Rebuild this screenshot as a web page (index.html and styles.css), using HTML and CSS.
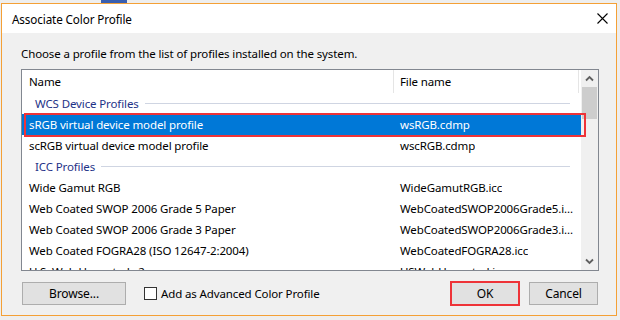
FILE: index.html
```html
<!DOCTYPE html>
<html>
<head>
<meta charset="utf-8">
<link rel="stylesheet" href="styles.css">
</head>
<body>
<div class="screen">
  <div class="behind-blue"></div>
  <div class="window">
    <div class="titlebar">
      <span class="title">Associate Color Profile</span>
      <svg class="close" width="11" height="11" viewBox="0 0 11 11"><path d="M0.5 0.5 L10.5 10.5 M10.5 0.5 L0.5 10.5" stroke="#000" stroke-width="1.1" fill="none"/></svg>
    </div>
    <div class="content">
      <p class="prompt">Choose a profile from the list of profiles installed on the system.</p>
      <div class="listbox">
        <div class="listmain">
          <div class="header">
            <div class="hcol hname">Name</div>
            <div class="hcol hfile">File name</div>
          </div>
          <div class="group"><span>WCS Device Profiles</span><i class="rule"></i></div>
          <div class="row selected"><span class="c1">sRGB virtual device model profile</span><span class="c2">wsRGB.cdmp</span></div>
          <div class="row"><span class="c1">scRGB virtual device model profile</span><span class="c2">wscRGB.cdmp</span></div>
          <div class="group"><span>ICC Profiles</span><i class="rule"></i></div>
          <div class="row"><span class="c1">Wide Gamut RGB</span><span class="c2">WideGamutRGB.icc</span></div>
          <div class="row"><span class="c1">Web Coated SWOP 2006 Grade 5 Paper</span><span class="c2">WebCoatedSWOP2006Grade5.i...</span></div>
          <div class="row"><span class="c1">Web Coated SWOP 2006 Grade 3 Paper</span><span class="c2">WebCoatedSWOP2006Grade3.i...</span></div>
          <div class="row"><span class="c1">Web Coated FOGRA28 (ISO 12647-2:2004)</span><span class="c2">WebCoatedFOGRA28.icc</span></div>
          <div class="row"><span class="c1">U.S. Web Uncoated v2</span><span class="c2">USWebUncoated.icc</span></div>
        </div>
        <div class="scrollbar">
          <div class="sbtn"><svg width="17" height="17" viewBox="0 0 17 17"><polyline points="5,10.5 8.5,7 12,10.5" fill="none" stroke="#606060" stroke-width="1.8"/></svg></div>
          <div class="thumb"></div>
          <div class="track"></div>
          <div class="sbtn"><svg width="17" height="17" viewBox="0 0 17 17"><polyline points="5,6.5 8.5,10 12,6.5" fill="none" stroke="#606060" stroke-width="1.8"/></svg></div>
        </div>
        <div class="mark-row"></div>
      </div>
      <div class="footer">
        <button class="btn browse">Browse...</button>
        <label class="check"><span class="box"></span><span>Add as Advanced Color Profile</span></label>
        <span class="spacer"></span>
        <button class="btn ok">OK</button>
        <button class="btn cancel">Cancel</button>
      </div>
    </div>
  </div>
</div>
</body>
</html>
```

FILE: styles.css
```css
* { box-sizing: border-box; }
html, body { margin: 0; padding: 0; }
body {
  font-family: "Noto Sans", "Open Sans", "DejaVu Sans", sans-serif;
  font-size: 11.5px;
  letter-spacing: -0.12px;
  color: #000;
}
.screen {
  position: relative;
  width: 620px;
  height: 320px;
  overflow: hidden;
  background: #eeeeee;
  padding: 3px 0 0 1px;
}
.behind-blue {
  position: absolute;
  left: 101px;
  top: 0;
  width: 26px;
  height: 3px;
  background: #3a5fb0;
}
.window {
  width: 616px;
  height: 313px;
  border: 1px solid #f4a036;
  display: flex;
  flex-direction: column;
}
.titlebar {
  height: 29px;
  background: #ffffff;
  display: flex;
  align-items: center;
  justify-content: space-between;
  padding: 0 8px 0 10px;
}
.title { line-height: 16px; font-size: 11.7px; }
.close { display: block; }
.content {
  flex: 1;
  background: #f0f0f0;
  padding: 13px 17px 0 19px;
}
.prompt {
  margin: 0;
  line-height: 16px;
  height: 16px;
  white-space: nowrap;
}
.listbox {
  position: relative;
  margin-top: 7px;
  width: 578px;
  height: 202px;
  border: 1px solid #828790;
  background: #ffffff;
  display: flex;
}
.listmain {
  flex: 1;
  overflow: hidden;
}
.header {
  display: flex;
  height: 23px;
  align-items: stretch;
}
.hcol {
  display: flex;
  align-items: center;
  border-right: 1px solid #e5e5e5;
  white-space: nowrap;
  flex-shrink: 0;
}
.hname { width: 372px; padding-left: 7px; }
.hfile { width: 185px; padding-left: 6px; }
.group {
  height: 21px;
  display: flex;
  align-items: center;
  padding: 0 11px 0 13px;
  color: #1e3287;
  white-space: nowrap;
}
.group .rule {
  flex: 1;
  height: 1px;
  background: #cfd5e2;
  margin-left: 6px;
}
.row {
  height: 21px;
  display: flex;
  align-items: center;
  white-space: nowrap;
}
.row .c1 { width: 372px; flex-shrink: 0; padding-left: 7px; overflow: hidden; }
.row .c2 { padding-left: 6px; overflow: hidden; }
.row.selected { background: #0078d7; color: #ffffff; }
.scrollbar {
  width: 17px;
  flex-shrink: 0;
  background: #f0f0f0;
  display: flex;
  flex-direction: column;
}
.sbtn { height: 17px; }
.sbtn svg { display: block; }
.thumb {
  height: 32px;
  margin: 0 1px;
  background: #cdcdcd;
}
.track { flex: 1; }
.mark-row {
  position: absolute;
  left: 2px;
  top: 43px;
  width: 562px;
  height: 24px;
  border: 2px solid #ee3338;
}
.footer {
  margin-top: 11px;
  height: 23px;
  display: flex;
  align-items: center;
}
.btn {
  font-family: inherit;
  font-size: 12px;
  letter-spacing: -0.12px;
  color: #000;
  height: 23px;
  padding: 0;
  background: #e1e1e1;
  border: 1px solid #adadad;
  border-radius: 0;
}
.browse { width: 104px; margin-left: 1px; }
.check {
  display: flex;
  align-items: center;
  margin-left: 18px;
  white-space: nowrap;
}
.box {
  width: 13px;
  height: 13px;
  border: 1px solid #333333;
  background: #ffffff;
  margin-right: 4px;
}
.spacer { flex: 1; }
.ok {
  width: 68px;
  outline: 2px solid #ee3338;
  outline-offset: -1px;
}
.cancel { width: 69px; margin-left: 10px; margin-right: 1px; }
```
